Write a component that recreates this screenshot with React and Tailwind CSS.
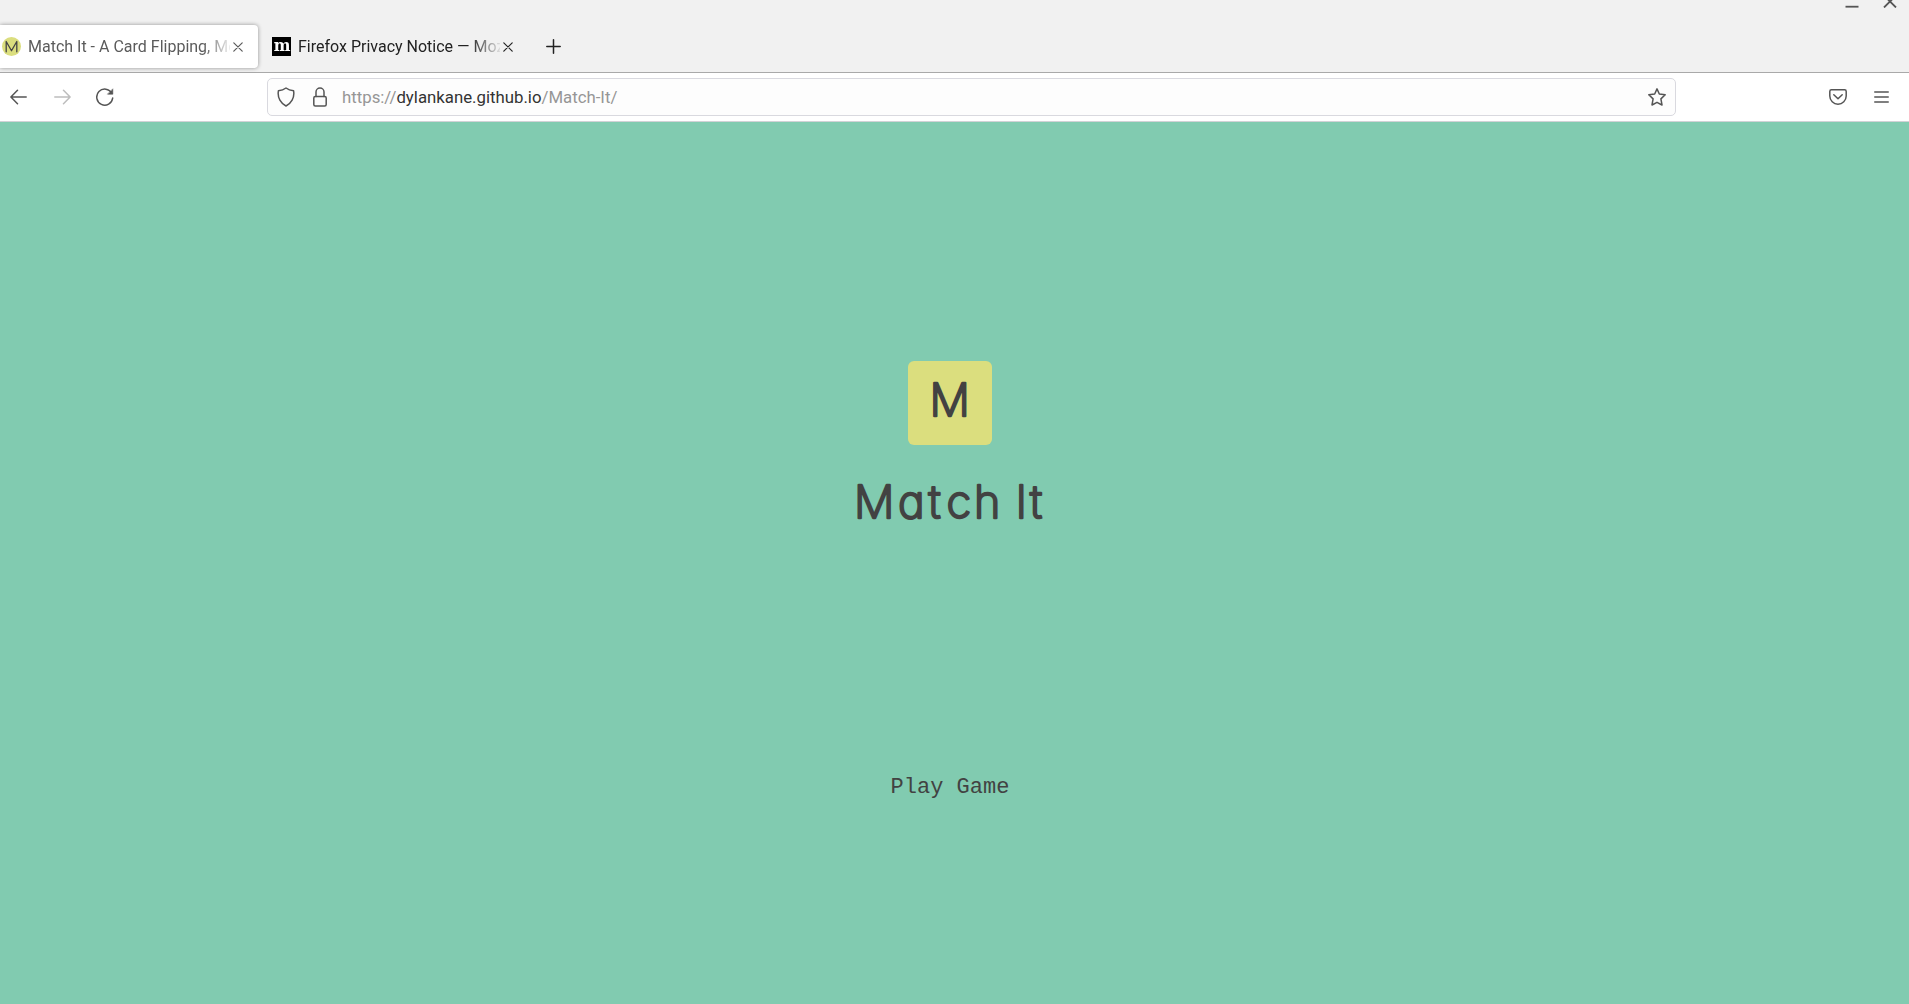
function Svg({ w, h, children, className = "" }) {
  return (
    <svg width={w} height={h} viewBox={`0 0 ${w} ${h}`} fill="none" stroke="currentColor" strokeWidth="1.5" strokeLinecap="round" strokeLinejoin="round" className={`block shrink-0 ${className}`}>
      {children}
    </svg>
  );
}

function Close() {
  return <Svg w={10} h={10}><path strokeWidth="1.2" d="M.8 .8L9.2 9.2M9.2 .8L.8 9.2" /></Svg>;
}

function TabTitle({ className, children }) {
  return (
    <div className={`overflow-hidden whitespace-nowrap pt-px text-[16px] leading-5 ${className}`}>
      {children}
    </div>
  );
}

function TabStrip() {
  return (
    <header className="relative h-[73px] border-b border-[#a9a9a9] bg-[#f1f1f1] flex items-start pt-[25px]">
      <div className="w-[258px] h-[43px] shrink-0 rounded-r bg-white shadow-[0_0_4px_rgba(0,0,0,0.4)] flex items-center pl-0.5 text-[#5b5b5b]">
        <Svg w={19} h={19}>
          <circle cx="9.5" cy="9.5" r="9.5" fill="#dbde7e" stroke="none" />
          <path strokeWidth="1.3" d="M4.2 14.8V4.5L9.5 13.8L14.8 4.5V14.8" stroke="#454545" />
        </Svg>
        <TabTitle className="ml-[7px] w-[202px] [mask-image:linear-gradient(to_right,black_175px,transparent_205px)]">Match It - A Card Flipping, Mem</TabTitle>
        <span className="ml-[3px]"><Close /></span>
      </div>
      <div className="h-[43px] flex items-center ml-[14px] text-[#222]">
        <div className="size-[19px] bg-black text-white overflow-hidden flex items-center justify-center font-['DejaVu_Serif',serif] font-bold text-[17px] leading-none pb-[3px]">
          <span className="inline-block scale-x-[0.93]">m</span>
        </div>
        <TabTitle className="ml-[7px] w-[202px] [mask-image:linear-gradient(to_right,black_172px,transparent_205px)]">Firefox Privacy Notice — Mozilla</TabTitle>
        <span className="ml-[3px]"><Close /></span>
      </div>
      <div className="h-[43px] flex items-center ml-[33px] text-[#222]">
        <Svg w={15} h={15}><path d="M7.5 .8V14.2M.8 7.5H14.2" /></Svg>
      </div>
      <div className="absolute right-[12px] top-0 flex items-start gap-[24px] text-[#555]">
        <Svg w={14} h={8}><path strokeWidth="1.8" strokeLinecap="butt" d="M.5 6.7H13.5" /></Svg>
        <Svg w={14} h={8}><path strokeWidth="1.8" strokeLinecap="butt" d="M1 7.5L13 -4.5M13 7.5L1 -4.5" /></Svg>
      </div>
    </header>
  );
}

function Toolbar() {
  return (
    <nav className="h-[49px] border-b border-[#d2d2d6] bg-white flex items-center text-[#555]">
      <Svg w={17} h={16} className="ml-[10px]"><path d="M16.2 8H1M7.5 1.3L.9 8L7.5 14.7" /></Svg>
      <Svg w={17} h={16} className="ml-[27px] text-[#bdbdbd]"><path d="M.8 8H16M9.5 1.3L16.1 8L9.5 14.7" /></Svg>
      <Svg w={18} h={18} className="ml-[25px]">
        <path d="M15.8 5.3A8 8 0 1 0 16.7 10" />
        <path d="M16.8 1.2V6.2H11.8Z" fill="currentColor" strokeWidth=".6" />
      </Svg>
      <div className="ml-[153px] w-[1409px] h-[38px] rounded-[5px] border border-[#d9d9df] bg-[#fdfdfd] flex items-center pl-[9px] pr-[9px]">
        <Svg w={18} h={20}><path d="M9 1Q12 3.2 16.6 3.8C17.8 11 14 16.5 9 19C4 16.5 .2 11 1.4 3.8Q6 3.2 9 1Z" /></Svg>
        <Svg w={14} h={20} className="ml-[18px]"><rect x=".8" y="9.5" width="12.4" height="9.6" rx="1.5" /><path d="M3 9.5V5A4 4 0 0 1 11 5V9.5" /></Svg>
        <div className="ml-[15px] text-[16.8px] leading-5 text-[#969696]">https://<span className="text-[#333]">dylankane.github.io</span>/Match-It/</div>
        <Svg w={18} h={18} className="ml-auto"><path d="M9 .9L11.3 6L17.2 6.7L12.9 10.9L14 17L9 14.3L4 17L5.1 10.9L.8 6.7L6.7 6Z" /></Svg>
      </div>
      <Svg w={18} h={16} className="ml-[153px]"><path d="M2.4 .8H15.6Q17.2 .8 17.2 2.4V7A8.2 8.2 0 0 1 .8 7V2.4Q.8 .8 2.4 .8ZM4.8 5.7L9 9.8L13.2 5.7" /></Svg>
      <Svg w={15} h={12} className="ml-[27px]"><path strokeWidth="1.3" d="M.7 1H14.3M.7 6H14.3M.7 11H14.3" /></Svg>
    </nav>
  );
}

// Logo lettering: light glyphs with a round-joined outline give soft terminals.
function Lettering({ w, h, x, y, children }) {
  return (
    <svg width={w} height={h} viewBox={`0 0 ${w} ${h}`} className="block overflow-visible">
      <text x={x} y={y} fill="#424242" stroke="#424242" strokeWidth="2.4" strokeLinejoin="round" strokeLinecap="round" className="font-[Inter,sans-serif] font-extralight text-[45px] [font-feature-settings:'cv11']">
        {children}
      </text>
    </svg>
  );
}

export default function App() {
  return (
    <div className="h-screen flex flex-col overflow-hidden font-[Roboto,sans-serif]">
      <TabStrip />
      <Toolbar />
      <main className="flex-1 bg-[#81cbb0] text-[#424242] flex flex-col items-center pt-[239px] pr-[9px]">
        <div className="size-[84px] rounded-md bg-[#dbde7e]">
          <Lettering w={84} h={84} x="21.5" y={54.9}>M</Lettering>
        </div>
        <h1 className="mt-[28px] w-[190px]">
          <Lettering w={190} h={56} x="-1 43 73.5 91.5 119 137 160.5 175" y={44.9}>Match It</Lettering>
        </h1>
        <button className="mt-[245px] font-['Liberation_Mono',monospace] text-[22px] leading-7">Play Game</button>
      </main>
    </div>
  );
}
